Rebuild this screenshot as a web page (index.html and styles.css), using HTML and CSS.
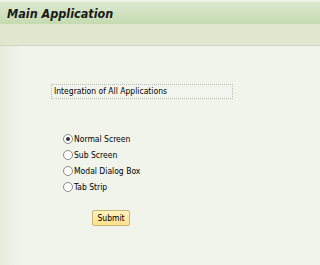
FILE: index.html
```html
<!DOCTYPE html>
<html lang="en">
<head>
    <meta charset="UTF-8">
    <title>Main Application</title>
    <link rel="stylesheet" href="styles.css">
</head>
<body>
    <div class="page">
        <div class="title-bar">
            <span class="title">Main Application</span>
        </div>
        <div class="tool-bar"></div>
        <div class="content">
            <div class="text-field">Integration of All Applications</div>
            <div class="radio-group">
                <label class="radio-row"><span class="radio checked"></span>Normal Screen</label>
                <label class="radio-row"><span class="radio"></span>Sub Screen</label>
                <label class="radio-row"><span class="radio"></span>Modal Dialog Box</label>
                <label class="radio-row"><span class="radio"></span>Tab Strip</label>
            </div>
            <button class="submit-btn">Submit</button>
        </div>
    </div>
</body>
</html>
```

FILE: styles.css
```css
body {
    margin: 0;
    font-family: "DejaVu Sans Condensed", "DejaVu Sans", sans-serif;
    font-stretch: condensed;
    background: #f0f4ea;
    color: #000000;
}

.page {
    height: 265px;
    background: linear-gradient(to right, #e6ecdc 0px, #f0f4ea 22px);
}

.title-bar {
    height: 22px;
    margin-top: 1px;
    border-top: 1px solid #e9efe2;
    background: linear-gradient(to bottom, #dce8d0, #c5dbb0);
    display: flex;
    align-items: center;
    padding-left: 7px;
}

.title {
    font-size: 12.5px;
    font-weight: bold;
    font-style: italic;
    color: #1a1a1a;
}

.tool-bar {
    height: 21px;
    background: #dfe7cf;
    border-bottom: 1px solid #cfd7c4;
}

.content {
    padding: 38px 0 0 51px;
}

.text-field {
    width: 176px;
    height: 11px;
    padding: 1px 2px;
    border: 1px dotted #b8bcb4;
    font-size: 8.5px;
    line-height: 11px;
    background: #f2f5ee;
}

.radio-group {
    margin: 32px 0 0 12px;
    display: flex;
    flex-direction: column;
}

.radio-row {
    display: flex;
    align-items: center;
    height: 16px;
    font-size: 8.5px;
}

.radio {
    width: 8px;
    height: 8px;
    border: 1px solid #8a8a8a;
    border-radius: 50%;
    background: #ffffff;
    margin-right: 1px;
    position: relative;
}

.radio.checked::after {
    content: "";
    position: absolute;
    left: 2px;
    top: 2px;
    width: 4px;
    height: 4px;
    border-radius: 50%;
    background: #333333;
}

.submit-btn {
    margin: 15px 0 0 41px;
    width: 38px;
    height: 16px;
    padding: 0;
    border: 1px solid #c9b47a;
    border-radius: 2px;
    background: linear-gradient(to bottom, #fff2bd, #ffe08a);
    font-family: "DejaVu Sans Condensed", "DejaVu Sans", sans-serif;
    font-stretch: condensed;
    font-size: 8.5px;
    color: #000000;
}
```
